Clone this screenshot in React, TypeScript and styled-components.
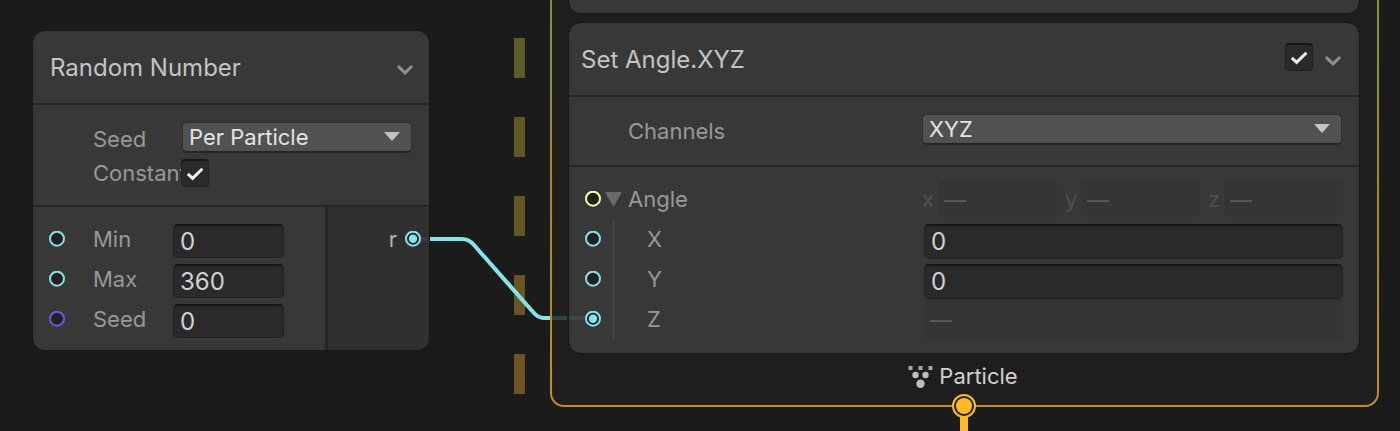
import React from "react";
import styled, { createGlobalStyle } from "styled-components";

const color = {
  canvas: "#1b1b1b",
  context: "#1e1e1e",
  panel: "#383838",
  output: "#303030",
  line: "#262626",
  float: "#84e4e7",
  uint: "#6e55e1",
  vector: "#f6ff9a",
  flow: "#ffbb21",
};

const GlobalStyle = createGlobalStyle`
  *, *::before, *::after { box-sizing: border-box; }
  body {
    margin: 0;
    background: ${color.canvas};
    font-family: Inter, "Liberation Sans", sans-serif;
  }
  input, select, button { font-family: inherit; }
`;

const Canvas = styled.main`
  position: relative;
  display: flex;
  align-items: flex-start;
  min-height: 100vh;
  padding: 0 21px 0 33px;
  overflow: hidden;
`;

const Panel = styled.section`
  background: ${color.panel};
  border-radius: 12px;
  overflow: hidden;
  box-shadow: 0 0 0 1px #181818;
`;

const OperatorNode = styled(Panel)`
  flex: 0 0 396px;
  margin-top: 31px;
`;

const Header = styled.header<{ $inset: number; $end: number }>`
  display: flex;
  align-items: center;
  height: 72px;
  padding: 2px ${(p) => p.$end}px 0 ${(p) => p.$inset}px;
`;

const Title = styled.h2`
  flex: 1;
  margin: 0;
  font-size: 24px;
  line-height: 32px;
  font-weight: 400;
  color: #c4c4c4;
`;

const CollapseButton = styled.button`
  display: flex;
  padding: 4px 0 0;
  border: 0;
  background: none;
  color: #8f8f8f;
`;

const Settings = styled.div<{ $padding: string }>`
  display: grid;
  gap: 2px;
  padding: ${(p) => p.$padding};
  border-top: 2px solid ${color.line};
`;

const SettingRow = styled.div<{ $columns: string }>`
  display: grid;
  grid-template-columns: ${(p) => p.$columns};
  align-items: center;
  height: 34px;
`;

const Label = styled.label`
  overflow: hidden;
  white-space: nowrap;
  font-size: 22px;
  line-height: 28px;
  color: #989898;
`;

const DropdownLabel = styled(Label)`
  padding-top: 4px;
`;

const SelectBox = styled.div`
  display: grid;
  grid-template-columns: 1fr 16px 11px;
  align-items: center;
  height: 31px;
  border: 1px solid #303030;
  border-bottom: 2px solid #242424;
  border-radius: 5px;
  background: #515151;

  svg {
    grid-area: 1 / 2;
    pointer-events: none;
  }
`;

const Select = styled.select`
  grid-area: 1 / 1 / 2 / 4;
  width: 100%;
  height: 28px;
  padding: 0 28px 0 6px;
  border: 0;
  background: none;
  appearance: none;
  font-size: 22px;
  line-height: 28px;
  color: #e4e4e4;
`;

const TickBox = styled.span`
  display: inline-grid;
  place-items: center;
  width: 28px;
  height: 28px;
  border: 1px solid #212121;
  border-top: 2px solid #161616;
  border-radius: 4px;
  background: #2a2a2a;

  input, svg { grid-area: 1 / 1; }
  svg { visibility: hidden; pointer-events: none; }
  input:checked + svg { visibility: visible; }
`;

const TickInput = styled.input`
  width: 100%;
  height: 100%;
  margin: 0;
  appearance: none;
`;

const Ports = styled.div`
  display: flex;
  border-top: 2px solid ${color.line};
`;

const Inputs = styled.div<{ $bottom: number; $end: number }>`
  flex: 1;
  min-width: 0;
  padding: 12px ${(p) => p.$end}px ${(p) => p.$bottom}px 16px;
`;

const Outputs = styled.div`
  flex: 0 0 104px;
  padding: 12px 8px;
  border-left: 3px solid ${color.line};
  background: ${color.output};
`;

const OutputRow = styled.div`
  display: flex;
  align-items: center;
  justify-content: flex-end;
  gap: 8px;
  height: 40px;
  font-size: 22px;
  color: #b4b4b4;
`;

const PortRow = styled.div<{ $columns: string }>`
  display: grid;
  grid-template-columns: ${(p) => p.$columns};
  align-items: center;
  height: 40px;
`;

const Field = styled.input<{ $height?: number }>`
  width: 100%;
  min-width: 0;
  height: ${(p) => p.$height ?? 35}px;
  margin-top: 4px;
  padding: 0 6px;
  border: 1px solid #202020;
  border-top: 2px solid #161616;
  border-radius: 5px;
  outline: 0;
  background: #2a2a2a;
  font-size: 24px;
  line-height: 32px;
  color: #d2d2d2;
`;

const MutedField = styled(Field)`
  margin: 0;
  padding: 0 5px;
  border: 1px solid #363636;
  border-top: 2px solid #313131;
  background: #353535;
  font-size: 22px;
  color: #5c5c5c;
`;

const VectorField = styled.div`
  display: flex;
  gap: 8px;
`;

const Axis = styled.label`
  display: grid;
  grid-template-columns: 16px 1fr;
  flex: 1;
  align-items: center;
  font-size: 22px;
  color: #505050;
`;

const FoldButton = styled.button`
  display: flex;
  padding: 0;
  border: 0;
  background: none;
`;

const Channels = styled.div`
  position: relative;

  &::before {
    content: "";
    position: absolute;
    top: 0;
    bottom: 0;
    left: 28px;
    width: 1px;
    background: #4c4c4c;
  }
`;

const Sequence = styled.div`
  display: flex;
  flex: 0 0 11px;
  flex-direction: column;
  gap: 39px;
  margin: 38px 25px 0 85px;
`;

const Dash = styled.span<{ $tone: string }>`
  height: 40px;
  background: ${(p) => p.$tone};
`;

const Context = styled.section`
  position: relative;
  flex: 1;
  min-width: 0;
  padding: 0 18px 0 17px;
  border: 2px solid transparent;
  border-top: 0;
  border-radius: 0 0 14px 14px;
  background:
    linear-gradient(${color.context}, ${color.context}) padding-box,
    linear-gradient(#7f9633, #a38a28 50%, #c18f1f) border-box;
`;

const PreviousBlock = styled(Panel)`
  height: 13px;
  margin-bottom: 10px;
  border-radius: 0 0 12px 12px;
`;

const HeaderTools = styled.div`
  display: flex;
  align-items: center;
  gap: 12px;
  margin-top: -6px;

  button { padding-top: 8px; }
`;

const ContextFooter = styled.footer`
  display: flex;
  align-items: center;
  justify-content: center;
  gap: 6px;
  height: 52px;
  padding: 0 2px 6px 0;
  font-size: 22px;
  line-height: 28px;
  color: #d0d0d0;
`;

const FlowAnchor = styled.svg`
  position: absolute;
  top: calc(100% - 11px);
  left: calc(50% - 13px);
`;

const Wires = styled.svg`
  position: absolute;
  top: 0;
  left: 0;
  pointer-events: none;
`;

const Chevron = () => (
  <svg width="16" height="10" viewBox="0 0 16 10" fill="none" aria-hidden="true">
    <path d="M1.8 1.8 8 7.8l6.2-6" stroke="currentColor" strokeWidth="3" strokeLinecap="round" />
  </svg>
);

const Port = ({ tone, linked }: { tone: string; linked?: boolean }) => (
  <svg width="16" height="16" viewBox="0 0 16 16" aria-hidden="true">
    <circle cx="8" cy="7.7" r="7" fill="#222" stroke={tone} strokeWidth="2" />
    {linked && <circle cx="8" cy="7.7" r="4.2" fill={tone} />}
  </svg>
);

const Tick = ({ id, label }: { id: string; label?: string }) => (
  <TickBox>
    <TickInput type="checkbox" id={id} aria-label={label} defaultChecked />
    <svg width="18" height="14" viewBox="0 0 18 14" fill="none" aria-hidden="true">
      <path d="M1.8 6.8 6.6 11.4 16.4 1.8" stroke="#ececec" strokeWidth="3" />
    </svg>
  </TickBox>
);

const Dropdown = ({ id, value }: { id: string; value: string }) => (
  <SelectBox>
    <Select id={id} defaultValue={value}>
      <option>{value}</option>
    </Select>
    <svg width="16" height="9" viewBox="0 0 16 9" aria-hidden="true">
      <path d="M0 0h16L8 9z" fill="#c4c4c4" />
    </svg>
  </SelectBox>
);

const operatorInputs = [
  { name: "Min", value: "0", tone: color.float },
  { name: "Max", value: "360", tone: color.float },
  { name: "Seed", value: "0", tone: color.uint },
];

const channelInputs = [
  { name: "X", value: "0" },
  { name: "Y", value: "0" },
  { name: "Z", value: null },
];

const dashTones = ["#5c5b25", "#5f5823", "#635620", "#69551f", "#6c541e"];

export default function App() {
  return (
    <>
      <GlobalStyle />
      <Canvas>
        <OperatorNode>
          <Header $inset={17} $end={16}>
            <Title>Random Number</Title>
            <CollapseButton aria-label="Collapse Random Number">
              <Chevron />
            </CollapseButton>
          </Header>
          <Settings $padding="15px 17px 15px 60px">
            <SettingRow $columns="89px 1fr">
              <DropdownLabel htmlFor="seed-mode">Seed</DropdownLabel>
              <Dropdown id="seed-mode" value="Per Particle" />
            </SettingRow>
            <SettingRow $columns="88px 1fr">
              <Label htmlFor="constant">Constant</Label>
              <Tick id="constant" />
            </SettingRow>
          </Settings>
          <Ports>
            <Inputs $bottom={11} $end={41}>
              {operatorInputs.map(({ name, value, tone }) => (
                <PortRow key={name} $columns="44px 80px 1fr">
                  <Port tone={tone} />
                  <Label htmlFor={`in-${name}`}>{name}</Label>
                  <Field id={`in-${name}`} $height={34} defaultValue={value} />
                </PortRow>
              ))}
            </Inputs>
            <Outputs>
              <OutputRow>
                r
                <Port tone={color.float} linked />
              </OutputRow>
            </Outputs>
          </Ports>
        </OperatorNode>

        <Sequence>
          {dashTones.map((tone) => (
            <Dash key={tone} $tone={tone} />
          ))}
        </Sequence>

        <Context>
          <PreviousBlock />
          <Panel>
            <Header $inset={12} $end={18}>
              <Title>Set Angle.XYZ</Title>
              <HeaderTools>
                <Tick id="enabled" label="Enable Set Angle.XYZ" />
                <CollapseButton aria-label="Collapse Set Angle.XYZ">
                  <Chevron />
                </CollapseButton>
              </HeaderTools>
            </Header>
            <Settings $padding="15px 17px 19px 59px">
              <SettingRow $columns="294px 1fr">
                <DropdownLabel htmlFor="channels">Channels</DropdownLabel>
                <Dropdown id="channels" value="XYZ" />
              </SettingRow>
            </Settings>
            <Ports>
              <Inputs $bottom={14} $end={16}>
                <PortRow $columns="20px 23px 294px 1fr">
                  <Port tone={color.vector} />
                  <FoldButton aria-label="Fold Angle">
                    <svg width="17" height="15" viewBox="0 0 17 15" aria-hidden="true">
                      <path d="M0 0h17L8.5 15z" fill="#6a6a6a" />
                    </svg>
                  </FoldButton>
                  <Label as="span">Angle</Label>
                  <VectorField>
                    {["x", "y", "z"].map((axis) => (
                      <Axis key={axis}>
                        {axis}
                        <MutedField $height={36} defaultValue="—" disabled />
                      </Axis>
                    ))}
                  </VectorField>
                </PortRow>
                <Channels>
                  {channelInputs.map(({ name, value }) => (
                    <PortRow key={name} $columns="62px 277px 1fr">
                      <Port tone={color.float} linked={value === null} />
                      <Label htmlFor={`angle-${name}`}>{name}</Label>
                      {value === null ? (
                        <MutedField id={`angle-${name}`} $height={40} defaultValue="—" disabled />
                      ) : (
                        <Field id={`angle-${name}`} defaultValue={value} />
                      )}
                    </PortRow>
                  ))}
                </Channels>
              </Inputs>
            </Ports>
          </Panel>
          <ContextFooter>
            <svg width="25" height="24" viewBox="0 0 25 24" fill="#bdbdbd" aria-hidden="true">
              <path d="M0.5 2h4v4h-4zM10.5 2h4v4h-4zM20.5 2h4v4h-4z" opacity="0.85" />
              <circle cx="7.5" cy="11" r="3.2" />
              <circle cx="17.5" cy="11" r="3.2" />
              <circle cx="12.5" cy="19.8" r="4.2" />
            </svg>
            Particle
          </ContextFooter>
          <FlowAnchor width="24" height="48" viewBox="0 0 24 48" aria-hidden="true">
            <path d="M12 20v28" stroke={color.flow} strokeWidth="8" />
            <circle cx="12" cy="12" r="11" fill="#1e1e1e" stroke={color.flow} strokeWidth="2" />
            <circle cx="12" cy="12" r="8" fill={color.flow} />
          </FlowAnchor>
        </Context>

        <Wires width="600" height="431" viewBox="0 0 600 431" fill="none" aria-hidden="true">
          <path
            d="M430 239h32q7 0 12 6l59 67q5 6 11 6h6"
            stroke={color.float}
            strokeWidth="4"
          />
          <path d="M552 318h15" stroke="#304446" strokeWidth="4" />
          <path d="M569 318h16M421 239h7" stroke={color.float} strokeOpacity="0.08" strokeWidth="4" />
        </Wires>
      </Canvas>
    </>
  );
}
